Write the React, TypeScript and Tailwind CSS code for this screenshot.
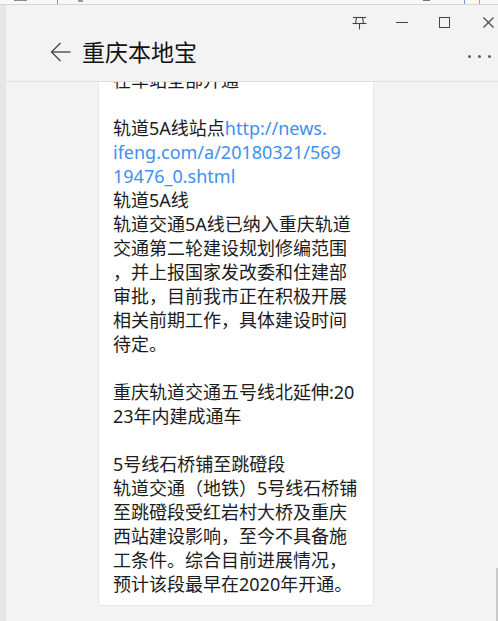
import React from 'react';

const FONT = { fontFamily: '"Noto Sans", "Noto Sans CJK SC", sans-serif' };

type Seg = { t: string; link?: boolean };

// one entry per visual line, as wrapped in the article view
const lines: Seg[][] = [
  [{ t: '在车站全部开通' }],
  [],
  [{ t: '轨道5A线站点' }, { t: 'http://news.', link: true }],
  [{ t: 'ifeng.com/a/20180321/569', link: true }],
  [{ t: '19476_0.shtml', link: true }],
  [{ t: '轨道5A线' }],
  [{ t: '轨道交通5A线已纳入重庆轨道' }],
  [{ t: '交通第二轮建设规划修编范围' }],
  [{ t: '，并上报国家发改委和住建部' }],
  [{ t: '审批，目前我市正在积极开展' }],
  [{ t: '相关前期工作，具体建设时间' }],
  [{ t: '待定。' }],
  [],
  [{ t: '重庆轨道交通五号线北延伸:20' }],
  [{ t: '23年内建成通车' }],
  [],
  [{ t: '5号线石桥铺至跳磴段' }],
  [{ t: '轨道交通（地铁）5号线石桥铺' }],
  [{ t: '至跳磴段受红岩村大桥及重庆' }],
  [{ t: '西站建设影响，至今不具备施' }],
  [{ t: '工条件。综合目前进展情况，' }],
  [{ t: '预计该段最早在2020年开通。' }],
];

function PinIcon() {
  return (
    <svg width="15" height="14" viewBox="0 0 15 14" fill="none" stroke="#444" strokeWidth="1.1">
      <path d="M1 1.5H14" />
      <path d="M4.5 1.5L3.5 7.5" />
      <path d="M10.5 1.5L11.5 7.5" />
      <path d="M0.5 7.5H14.5" />
      <path d="M7.5 7.5V13.5" />
    </svg>
  );
}

export default function App() {
  return (
    <div className="w-[498px] h-[621px] overflow-hidden flex flex-col bg-[#f3f3f3]" style={FONT}>
      {/* partial browser strip behind the window */}
      <div className="h-[5px] flex items-start bg-[#f8f8f8] border-b border-[#d6d6d6]">
        <div className="ml-[14px] w-[13px] h-[1px] bg-[#8a8a8a]" />
        <div className="ml-[30px] w-[1px] h-[4px] bg-[#3bb3a0]" />
        <div className="ml-[20px] w-[5px] h-[2px] bg-[#9a9a9a]" />
        <div className="ml-[340px] w-[7px] h-[1px] bg-[#777]" />
        <div className="ml-[34px] w-[1px] h-[4px] bg-[#6b9bd8]" />
        <div className="ml-[14px] w-[1px] h-[4px] bg-[#d9925a]" />
      </div>

      <div className="flex-1 flex min-h-0">
        <div className="w-[6px] bg-[#e8e6e3]" />

        <div className="flex-1 flex flex-col min-w-0 relative">
          {/* window title bar */}
          <div className="h-[34px] flex items-center">
            <div className="ml-[346px] mt-[1px]">
              <PinIcon />
            </div>
            <div className="ml-[29px] w-[12px] h-[1px] bg-[#444]" />
            <div className="ml-[31px] w-[11px] h-[11px] border border-[#444]" />
            <svg className="ml-[33px]" width="11" height="11" viewBox="0 0 11 11" stroke="#444" strokeWidth="1.1">
              <path d="M0.5 0.5L10.5 10.5M10.5 0.5L0.5 10.5" />
            </svg>
          </div>

          {/* app header */}
          <div className="h-[43px] flex items-start border-b border-[#dedede]">
            <svg className="ml-[44px] mt-[3px]" width="21" height="20" viewBox="0 0 21 20" fill="none" stroke="#4a4a4a" strokeWidth="1.4">
              <path d="M20.5 10H1.5" />
              <path d="M10.5 1L1.5 10L10.5 19" />
            </svg>
            <div className="ml-[11px] text-[23px] leading-[26px] text-[#111] whitespace-nowrap">重庆本地宝</div>
            <div className="ml-auto mr-[7px] mt-[16px] flex gap-[7px]">
              <span className="w-[3px] h-[3px] rounded-full bg-[#5c5c5c]" />
              <span className="w-[3px] h-[3px] rounded-full bg-[#5c5c5c]" />
              <span className="w-[3px] h-[3px] rounded-full bg-[#5c5c5c]" />
            </div>
          </div>

          {/* scrolled article */}
          <div className="flex-1 overflow-hidden">
            <div className="ml-[92px] w-[276px] -mt-[15px] bg-white border border-[#e6e6e6] rounded-[3px] pl-[14px] pb-[9px] pt-0">
              {lines.map((segs, i) => (
                <div key={i} className="h-[24px] text-[18px] leading-[24px] text-[#1c1c1c] whitespace-nowrap">
                  {segs.map((s, j) =>
                    s.link ? (
                      <span key={j} className="text-[#3d8ff2]">{s.t}</span>
                    ) : (
                      <span key={j}>{s.t}</span>
                    )
                  )}
                </div>
              ))}
            </div>
          </div>

          {/* scrollbar thumb */}
          <div className="absolute right-0 bottom-0 w-[2px] h-[53px] bg-[#c9c9c9]" />
        </div>
      </div>
    </div>
  );
}
